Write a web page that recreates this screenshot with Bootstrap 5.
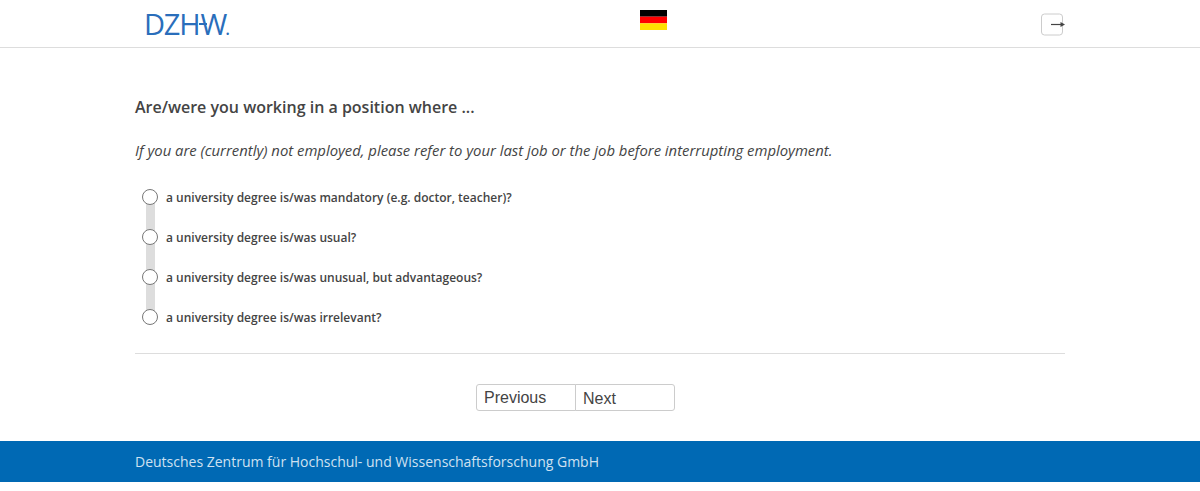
<!DOCTYPE html>
<html lang="en">
<head>
  <meta charset="UTF-8" />
  <meta name="viewport" content="width=device-width, initial-scale=1.0" />
  <title>DZHW Survey</title>
  <link href="https://cdn.jsdelivr.net/npm/bootstrap@5.3.0/dist/css/bootstrap.min.css" rel="stylesheet" />
  <style>
    html, body { height: 491px; overflow: hidden; }
    body { font-family: "Open Sans", sans-serif; color: #444; background: #fff; }
    .survey-wrap { width: 960px; max-width: 960px; padding: 0 15px; margin: 0 auto; }
    .top-bar { height: 48px; border-bottom: 1px solid #ddd; }
    .top-inner { height: 47px; position: relative; }
    .dzhw-logo { position: relative; font-family: "Open Sans", sans-serif; font-weight: 400; font-size: 29px; line-height: 29px; color: #2a6ebb; letter-spacing: -1.2px; margin: 9px 0 0 9px; text-decoration: none; white-space: nowrap; }
    .dzhw-logo b { font-weight: 400; margin-left: 1px; }
    .dzhw-logo i { font-style: normal; font-size: 20px; margin-left: -1px; }
    .dzhw-logo::after { content: ""; position: absolute; left: 55px; top: 14px; width: 8px; height: 2px; background: #2a6ebb; }
    .flag-link { position: absolute; left: 520px; top: 10px; display: block; line-height: 0; }
    .exit-link { line-height: 0; margin-top: 13px; }
    .main-area { height: 393px; padding-top: 49px; }
    .q-title { font-size: 16px; font-weight: 600; line-height: 20px; margin: 0 0 23px; color: #444; }
    .q-hint { font-size: 14.85px; font-style: italic; line-height: 20px; margin: 0 0 17px; }
    .answer-list { position: relative; padding-bottom: 16px; border-bottom: 1px solid #ddd; }
    .answer-rail { position: absolute; left: 11px; top: 20px; width: 9px; height: 120px; background: #ddd; }
    .answer-row { position: relative; height: 40px; padding-left: 7px; gap: 8px; }
    .answer-row input { appearance: none; width: 16px; height: 16px; margin: -1px 0 0; flex: none; border: 1px solid #777; border-radius: 50%; background: #fff; }
    .answer-row label { font-size: 12px; font-weight: 600; color: #444; line-height: 20px; margin-top: 2px; }
    .pager { margin-top: 30px; padding-right: 50px; }
    .pager .btn { width: 100px; height: 27px; font-family: "Liberation Sans", sans-serif; font-size: 16px; line-height: 18px; text-align: left; color: #444; background: #fff; border: 1px solid #ccc; border-radius: 3px 0 0 3px; padding: 3px 7.5px; }
    .pager .btn + .btn { padding-top: 5px; margin-left: -1px; border-radius: 0 3px 3px 0; }
    .foot-bar { height: 41px; background: #0069b4; color: #cfe1f1; font-size: 14px; line-height: 41px; }
  </style>
</head>
<body>
  <header class="top-bar">
    <div class="survey-wrap top-inner d-flex justify-content-between">
      <a class="dzhw-logo" href="#">DZH<b>W</b><i>.</i></a>
      <a class="flag-link" href="#">
        <svg width="27" height="20" viewBox="0 0 27 20"><rect width="27" height="6.67" fill="#000"/><rect y="6.67" width="27" height="6.67" fill="#f00"/><rect y="13.33" width="27" height="6.67" fill="#ffdf00"/></svg>
      </a>
      <a class="exit-link" href="#">
        <svg width="24" height="24" viewBox="0 0 24 24"><rect x="0.5" y="1" width="21" height="21" rx="3" fill="#fff" stroke="#ccc"/><path d="M10 11.5h10" stroke="#444" stroke-width="1.2" fill="none"/><path d="M19.5 9l4.5 2.5-4.5 2.5z" fill="#444"/></svg>
      </a>
    </div>
  </header>

  <main class="main-area">
    <div class="survey-wrap">
      <h1 class="q-title">Are/were you working in a position where ...</h1>
      <p class="q-hint">If you are (currently) not employed, please refer to your last job or the job before interrupting employment.</p>
      <form>
        <div class="answer-list">
          <div class="answer-rail"></div>
          <div class="answer-row d-flex align-items-center">
            <input type="radio" name="q1" id="a1" />
            <label for="a1">a university degree is/was mandatory (e.g. doctor, teacher)?</label>
          </div>
          <div class="answer-row d-flex align-items-center">
            <input type="radio" name="q1" id="a2" />
            <label for="a2">a university degree is/was usual?</label>
          </div>
          <div class="answer-row d-flex align-items-center">
            <input type="radio" name="q1" id="a3" />
            <label for="a3">a university degree is/was unusual, but advantageous?</label>
          </div>
          <div class="answer-row d-flex align-items-center">
            <input type="radio" name="q1" id="a4" />
            <label for="a4">a university degree is/was irrelevant?</label>
          </div>
        </div>
        <div class="pager d-flex justify-content-center">
          <button type="button" class="btn">Previous</button>
          <button type="button" class="btn">Next</button>
        </div>
      </form>
    </div>
  </main>

  <footer class="foot-bar">
    <div class="survey-wrap">Deutsches Zentrum für Hochschul- und Wissenschaftsforschung GmbH</div>
  </footer>

  <script src="https://cdn.jsdelivr.net/npm/bootstrap@5.3.0/dist/js/bootstrap.bundle.min.js"></script>
</body>
</html>
